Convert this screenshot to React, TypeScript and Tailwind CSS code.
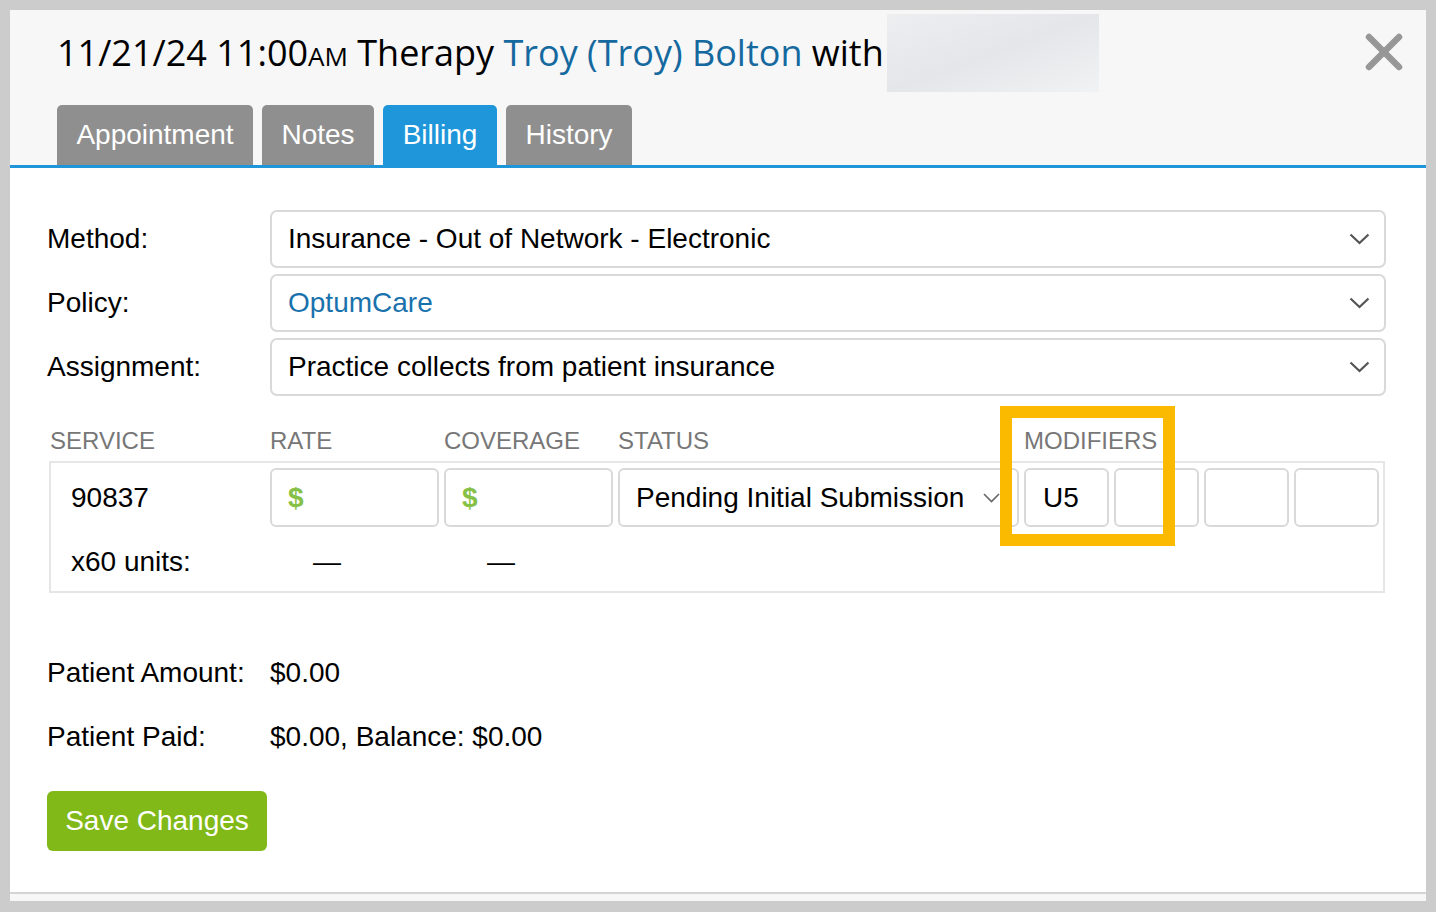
import React from 'react';

const Chevron: React.FC<{ small?: boolean }> = ({ small }) =>
  small ? (
    <svg width="17" height="10" viewBox="0 0 17 10" className="shrink-0">
      <polyline points="1,1 8.5,8.5 16,1" fill="none" stroke="#666" strokeWidth="1.6" />
    </svg>
  ) : (
    <svg width="21" height="12" viewBox="0 0 21 12" className="shrink-0">
      <polyline points="1.5,1.5 10.5,10 19.5,1.5" fill="none" stroke="#555" strokeWidth="2.2" />
    </svg>
  );

const SelectBox: React.FC<{ value: string; blue?: boolean }> = ({ value, blue }) => (
  <div className="flex-1 h-[58px] border-2 border-[#d9d9d9] rounded-[7px] bg-white flex items-center justify-between pl-[16px] pr-[14px]">
    <span className={blue ? 'text-[#1a72ad]' : 'text-black'}>{value}</span>
    <Chevron />
  </div>
);

const tabs = [
  { name: 'Appointment', w: 'w-[196px]' },
  { name: 'Notes', w: 'w-[112px]' },
  { name: 'Billing', w: 'w-[114px]' },
  { name: 'History', w: 'w-[126px]' },
];

export default function App() {
  return (
    <div
      className="relative w-[1436px] h-[912px] overflow-hidden bg-[#cccccc] pt-[10px] pl-[10px]"
      style={{ fontFamily: '"Liberation Sans", Arial, sans-serif' }}
    >
      <div className="w-[1416px] h-[891px] bg-white flex flex-col">
        {/* header */}
        <div className="bg-[#f7f7f7] pt-[4px] border-b-[3px] border-[#1f96d9]">
          <div className="flex items-center h-[78px] pl-[47px] pr-[23px]">
            <div
              className="text-[36px] text-black whitespace-nowrap"
              style={{ fontFamily: '"Open Sans", sans-serif' }}
            >
              11/21/24 11:00<span className="text-[26px]">AM</span> Therapy{' '}
              <span className="text-[#15699f]">Troy (Troy) Bolton</span> with
            </div>
            <div className="ml-[3px] w-[212px] h-[78px] bg-gradient-to-br from-[#eceef0] via-[#e4e6e9] to-[#f1f2f3]" />
            <div className="flex-1" />
            <svg width="38" height="38" viewBox="0 0 38 38" className="mb-[2px]">
              <line x1="4" y1="4" x2="34" y2="34" stroke="#979797" strokeWidth="6.5" strokeLinecap="round" />
              <line x1="34" y1="4" x2="4" y2="34" stroke="#979797" strokeWidth="6.5" strokeLinecap="round" />
            </svg>
          </div>
          <div className="flex gap-[9px] pl-[47px] mt-[13px]">
            {tabs.map(t => (
              <div
                key={t.name}
                className={`${t.w} h-[60px] rounded-t-[5px] flex items-center justify-center text-[28px] text-white ${
                  t.name === 'Billing' ? 'bg-[#1f96d9]' : 'bg-[#8f8f8f]'
                }`}
              >
                {t.name}
              </div>
            ))}
          </div>
        </div>

        {/* body */}
        <div className="flex-1 pl-[37px] pr-[40px] pt-[42px] text-[28px] text-black">
          <div className="flex flex-col gap-[6px]">
            {[
              ['Method:', 'Insurance - Out of Network - Electronic', false],
              ['Policy:', 'OptumCare', true],
              ['Assignment:', 'Practice collects from patient insurance', false],
            ].map(([label, value, blue]) => (
              <div key={label as string} className="flex items-center">
                <div className="w-[223px]">{label as string}</div>
                <SelectBox value={value as string} blue={blue as boolean} />
              </div>
            ))}
          </div>

          {/* service table headers */}
          <div className="flex pl-[3px] mt-[26px] h-[38px] items-center text-[24px] text-[#777]">
            <div className="w-[220px]">SERVICE</div>
            <div className="w-[174px]">RATE</div>
            <div className="w-[174px]">COVERAGE</div>
            <div className="w-[406px]">STATUS</div>
            <div>MODIFIERS</div>
          </div>

          <div className="ml-[2px] mt-[1px] w-[1336px] border-2 border-[#e6e6e6]">
            <div className="flex items-center pt-[5px]">
              <div className="w-[219px] pl-[20px]">90837</div>
              <div className="w-[169px] h-[59px] border-2 border-[#d9d9d9] rounded-[6px] flex items-center pl-[16px] text-[#86c046] font-bold">
                $
              </div>
              <div className="ml-[5px] w-[169px] h-[59px] border-2 border-[#d9d9d9] rounded-[6px] flex items-center pl-[16px] text-[#86c046] font-bold">
                $
              </div>
              <div className="ml-[5px] w-[401px] h-[59px] border-2 border-[#d9d9d9] rounded-[6px] flex items-center justify-between pl-[16px] pr-[17px]">
                <span>Pending Initial Submission</span>
                <Chevron small />
              </div>
              {['U5', '', '', ''].map((m, i) => (
                <div
                  key={i}
                  className="ml-[5px] w-[85px] h-[59px] border-2 border-[#d9d9d9] rounded-[6px] flex items-center pl-[17px]"
                >
                  {m}
                </div>
              ))}
            </div>
            <div className="flex items-center pt-[20px] pb-[14px] leading-[30px]">
              <div className="w-[219px] pl-[20px]">x60 units:</div>
              <div className="w-[174px] pl-[43px]">—</div>
              <div className="w-[174px] pl-[43px]">—</div>
            </div>
          </div>

          <div className="mt-[65px] flex flex-col gap-[34px] leading-[30px]">
            <div className="flex">
              <div className="w-[223px]">Patient Amount:</div>
              <div>$0.00</div>
            </div>
            <div className="flex">
              <div className="w-[223px]">Patient Paid:</div>
              <div>$0.00, Balance: $0.00</div>
            </div>
          </div>

          <button className="mt-[39px] h-[60px] w-[220px] rounded-[6px] bg-[#80b918] text-white text-[28px] flex items-center justify-center">
            Save Changes
          </button>
        </div>

        {/* footer strip */}
        <div className="h-[9px] border-t-2 border-[#d4d4d4] bg-[#f7f7f7]" />
      </div>

      {/* highlight annotation */}
      <div className="absolute left-[1000px] top-[406px] w-[175px] h-[140px] border-[12px] border-[#fbb900]" />
    </div>
  );
}
